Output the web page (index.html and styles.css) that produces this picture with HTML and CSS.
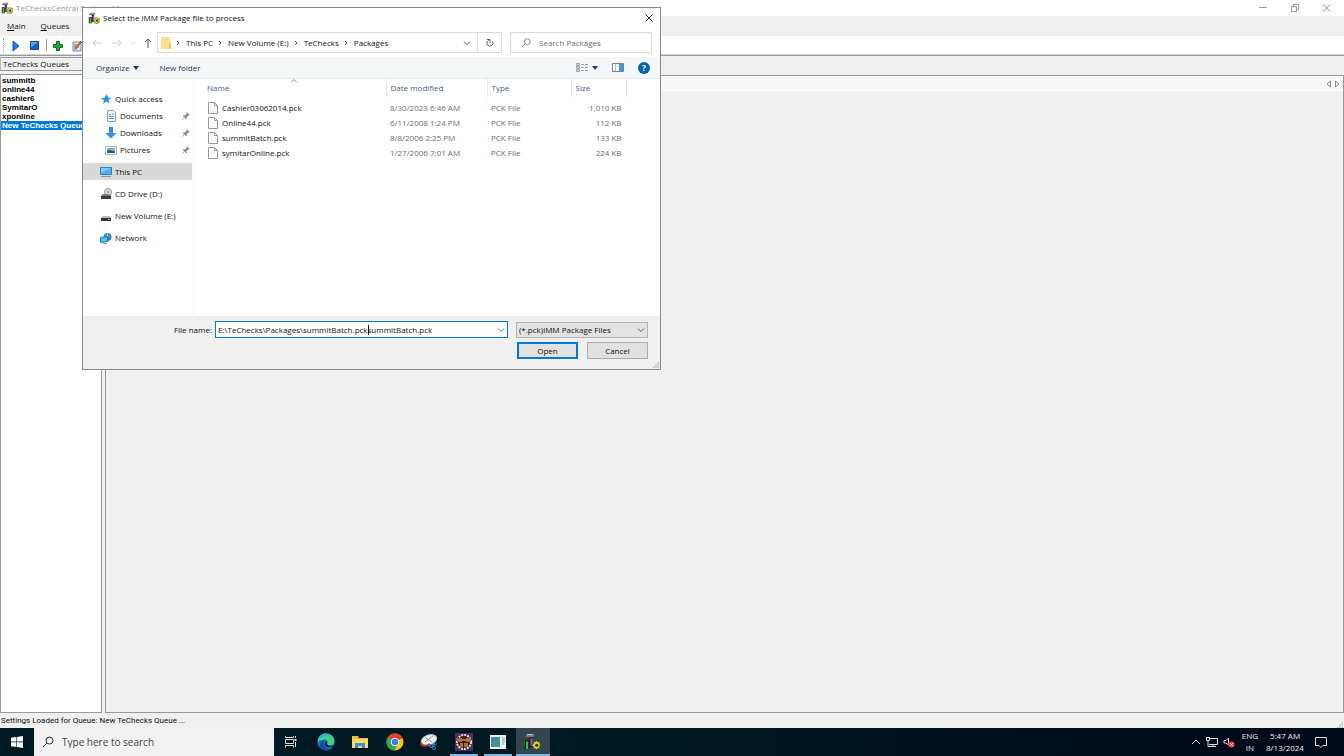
FILE: index.html
```html
<!DOCTYPE html>
<html lang="en">
<head>
    <meta charset="UTF-8">
    <meta name="viewport" content="width=device-width, initial-scale=1.0">
    <title>TeChecksCentral Settings Manager</title>
    <link rel="stylesheet" href="styles.css">
</head>
<body>
    <!-- shared icons -->
    <svg class="defs" width="0" height="0">
        <symbol id="app" viewBox="0 0 16 16">
            <path d="M1 4 3 1h6l1 2-2 1z" fill="#777"/>
            <path d="M3 1h5v1H3z" fill="#ccc"/>
            <path d="M1 7h4v8H1z" fill="#111"/>
            <path d="M2 8h2v7H2z" fill="#19d84b"/>
            <path d="M5 4h3v9H5z" fill="#111"/>
            <path d="M6 5h2v7H6z" fill="#c63bd0"/>
            <path d="m9 7 1.500 1.500L12 7l1 1.500L15 8v2.500l1 1-1.500 1 .5 2-2 0-1 1.500-1.500-1.500-2 .5.500-2L7 11.500 9 10z" fill="#d8d827" stroke="#333" stroke-width=".6"/>
            <circle cx="12" cy="11.500" r="1.500" fill="#333"/>
        </symbol>
        <symbol id="file" viewBox="0 0 10 12">
            <path d="M.5.5h6l3 3v8h-9z" fill="#fafafa" stroke="#999"/>
            <path d="M6.500.5v3h3" fill="none" stroke="#999"/>
        </symbol>
        <symbol id="pin" viewBox="0 0 10 10">
            <path d="m6 0 4 4-1 .5-1-.2-2 2 .1 2-1 .7L1 5l.7-1 2 .1 2-2L5.500 1z" fill="#8794a0"/>
            <path d="M3 7 .5 9.500" stroke="#8794a0"/>
        </symbol>
        <symbol id="down" viewBox="0 0 8 8">
            <path d="m1 2.500 3 3 3-3" fill="none" stroke="currentColor"/>
        </symbol>
        <symbol id="right" viewBox="0 0 8 8">
            <path d="m3 2 2 2-2 2" fill="none" stroke="currentColor"/>
        </symbol>
        <symbol id="glass" viewBox="0 0 12 12">
            <circle cx="7.500" cy="4.500" r="3.500" fill="none" stroke="currentColor"/>
            <path d="M5 7 1 11" stroke="currentColor"/>
        </symbol>
        <symbol id="grip" viewBox="0 0 8 8">
            <path d="M6 0h2v2H6zM3 3h2v2H3zM6 3h2v2H6zM0 6h2v2H0zM3 6h2v2H3zM6 6h2v2H6z" fill="#bcbcbc"/>
        </symbol>
    </svg>

    <div class="desktop">
        <header class="titlebar">
            <svg class="app-icon"><use href="#app"/></svg>
            <span class="app-title">TeChecksCentral Settings Manager</span>
            <button class="win-btn" aria-label="Minimize"><svg width="8" height="8"><path d="M0 3.500h8" stroke="#999"/></svg></button>
            <button class="win-btn" aria-label="Restore"><svg width="8" height="8" fill="none" stroke="#999"><path d="M.5 2.500h5v5h-5zM2.500 2V.5h5v5H6"/></svg></button>
            <button class="win-btn" aria-label="Close"><svg width="8" height="8"><path d="m.5.5 7 7m0-7-7 7" stroke="#999"/></svg></button>
        </header>
        <nav class="menubar">
            <button><u>M</u>ain</button>
            <button><u>Q</u>ueues</button>
        </nav>
        <div class="toolbar">
            <span class="handle"></span>
            <button aria-label="Start"><svg width="8" height="12"><path d="M1 1v10l6-5z" fill="#2878e0" stroke="#1050b0"/></svg></button>
            <button aria-label="Stop"><svg width="10" height="10"><path d="M.5.5h8v8h-8z" fill="#1762c8" stroke="#0c4ba8"/><path d="M1 1h7L1 6z" fill="#5aa2ee"/></svg></button>
            <span class="divider"></span>
            <button aria-label="Add"><svg width="12" height="12"><path d="M4.500 1.500h3v3h3v3h-3v3h-3v-3h-3v-3h3z" fill="#2ea32e" stroke="#0d6f12"/></svg></button>
            <button aria-label="Edit"><svg width="10" height="12"><path d="M1 2h8v9H1z" fill="#dce6f6" stroke="#7788a0"/><path d="M2 5h5M2 7h5M2 9h3" stroke="#4d74c0"/><path d="m3.500 8.500 5-6" stroke="#c36a20" stroke-width="2"/><path d="m8 1 2 2" stroke="#333"/></svg></button>
        </div>

        <div class="work">
            <aside class="queues">
                <div class="queues-head">TeChecks Queues</div>
                <ul class="queue-list">
                    <li>summitb</li>
                    <li>online44</li>
                    <li>cashier6</li>
                    <li>SymitarO</li>
                    <li>xponline</li>
                    <li class="selected">New TeChecks Queue</li>
                </ul>
            </aside>
            <main class="settings">
                <div class="tab-strip">
                    <button aria-label="Previous tab"><svg width="5" height="8"><path d="M4.500 1v6L1 4z" fill="none" stroke="#888"/></svg></button>
                    <button aria-label="Next tab"><svg width="5" height="8"><path d="M.5 1v6L4 4z" fill="none" stroke="#888"/></svg></button>
                </div>
            </main>
        </div>
        <footer class="status">
            <span>Settings Loaded for Queue: New TeChecks Queue ...</span>
            <svg width="6" height="6"><use href="#grip"/></svg>
        </footer>

        <div class="taskbar">
            <button class="start" aria-label="Start menu"><svg width="12" height="12"><path d="M0 1.700 5.400 1v4.600H0zM6 .9 12 0v5.600H6zM0 6.300h5.400V11L0 10.300zM6 6.300h6V12l-6-.9z" fill="#fff"/></svg></button>
            <label class="task-search">
                <svg width="12" height="12"><use href="#glass"/></svg>
                <input type="text" placeholder="Type here to search" aria-label="Type here to search">
            </label>
            <div class="tasks">
                <button aria-label="Task view"><svg width="12" height="12" fill="none" stroke="#ddd"><path d="M.5 0v1.500h8V0M.5 3.500h8v4h-8zM.5 11.500v-2h8v2M10.500 0v2M10.500 6v5"/><path d="M10.500 3v2" stroke-width="2"/></svg></button>
                <button aria-label="Edge"><svg width="18" height="18" viewBox="0 0 18 18"><circle cx="9" cy="9" r="8.500" fill="#1479cf"/><path d="M1 7C2 2 6 .5 9 .5c5 0 8.500 4 8.500 7.500 0 3-2 4.500-4.500 4.500-2 0-3-1-2.500-2 1-2-.5-4-3-4-3 0-5.500 1-6.500 3z" fill="#3fd08e"/><path d="M1 7C2 2 6 .5 9 .5c2 0 4 .8 5.500 2C9 2 4 4 1 7z" fill="#29b5d6"/><path d="M7 7c-2 4 1 9 6 9-2 1.500-6 2-9-.5C1 12 3 8 7 7z" fill="#0d4fa0"/><path d="M8.500 8c1 0 2 1.500 1.500 3 1 2 4 2.500 6 1.500l1 0-2 1.500c-4 1-7-.5-7.500-2.500 0-1 .3-2.500 1-3.500z" fill="#061c26"/></svg></button>
                <button aria-label="File Explorer"><svg width="16" height="14"><path d="M0 1h6l1 2h9v10H0z" fill="#f0b93a"/><path d="M0 4h16v9H0z" fill="#ffd866"/><path d="M3 13V8h10v5h-3v-2H6v2z" fill="#368fd8"/></svg></button>
                <button aria-label="Chrome"><svg width="18" height="18" viewBox="0 0 18 18"><circle cx="9" cy="9" r="8.500" fill="#fbc116"/><path d="M9 9 1.600 4.800A8.500 8.500 0 0 1 16.400 5z" fill="#e33b2e"/><path d="M9 9 1.600 4.800A8.500 8.500 0 0 0 8.500 17.500L12 11z" fill="#2da94f"/><path d="M9 5h7.400" stroke="#e33b2e"/><circle cx="9" cy="9" r="4.200" fill="#fff"/><circle cx="9" cy="9" r="3.200" fill="#3b7de9"/></svg></button>
                <button aria-label="Snipping Tool"><svg width="18" height="18"><ellipse cx="9" cy="7" rx="8" ry="5" transform="rotate(-20 9 7)" fill="#f2f2f2" stroke="#bbb"/><path d="M1 10c1 4 6 3 9 1" fill="none" stroke="#c8352c" stroke-width="2"/><path d="m5 9 8-6M6 5l6 4" stroke="#8d9298"/><g fill="none" stroke="#2c8bd2"><circle cx="11" cy="13" r="1.500"/><circle cx="14" cy="15" r="1.500"/><path d="m12 12 5-1M14 14V9"/></g></svg></button>
                <button class="open" aria-label="Toolkit"><svg width="18" height="18"><path d="M0 0h18v18H0z" fill="#47305f"/><circle cx="9" cy="9" r="7" fill="#241d23" stroke="#e4e4e4" stroke-width="2" stroke-dasharray="2 1"/><path d="M2 5h5v4H2zM11 5h5v4h-5zM6 6h6v2H6zM5 10h3v4H5zM9 10h4v4H9z" fill="#c0692a"/></svg></button>
                <button class="open" aria-label="Viewer"><svg width="16" height="14"><path d="M0 0h16v14H0z" fill="#eef1f1"/><path d="M1 2h9v10H1z" fill="#3f9a86"/><path d="M1 2h9L1 9z" fill="#4d80b8"/><path d="M12 3h3M12 5h3M12 7h3M12 9h2" stroke="#8b9ba0"/></svg></button>
                <button class="open active" aria-label="TeChecksCentral"><svg width="17" height="17"><use href="#app"/></svg></button>
            </div>
            <div class="tray">
                <svg width="10" height="8"><path d="m1 6 4-4 4 4" fill="none" stroke="#ddd"/></svg>
                <svg width="12" height="12" fill="none" stroke="#ddd"><path d="M3 2.500h8.500v6H3M7 8.500v2M4 10.500h6M.5 1.500h3v3h-3zM2 4.500v6h2"/></svg>
                <svg width="12" height="12"><path d="M1 4.500h2L5.500 2v7L3 7H1z" fill="none" stroke="#ddd"/><circle cx="8.500" cy="8.500" r="3.200" fill="#e52d35"/><path d="m7 7 3 3m0-3-3 3" stroke="#fff"/></svg>
                <div class="lang">ENG<br>IN</div>
                <div class="clock">5:47 AM<br>8/13/2024</div>
                <svg width="12" height="12"><path d="M.5 1.500h11v8H8l-2 2-2-2H.5z" fill="none" stroke="#ddd"/></svg>
            </div>
        </div>
    </div>

    <div class="dialog" role="dialog" aria-label="Select the iMM Package file to process">
        <div class="dialog-title">
            <svg class="app-icon"><use href="#app"/></svg>
            <span>Select the iMM Package file to process</span>
            <button aria-label="Close dialog"><svg width="8" height="8"><path d="m.5.5 7 7m0-7-7 7" stroke="#222"/></svg></button>
        </div>

        <div class="address-row">
            <div class="history">
                <button aria-label="Back"><svg width="10" height="8" fill="none" stroke="#ccc"><path d="M10 4H1m3-3L1 4l3 3"/></svg></button>
                <button aria-label="Forward"><svg width="10" height="8" fill="none" stroke="#ccc"><path d="M0 4h9M6 1l3 3-3 3"/></svg></button>
                <button class="recent" aria-label="Recent"><svg width="6" height="6"><use href="#down"/></svg></button>
                <button aria-label="Up"><svg width="8" height="10" fill="none" stroke="#555"><path d="M4 10V1M1 4l3-3 3 3"/></svg></button>
            </div>
            <div class="address">
                <svg width="10" height="12"><path d="M0 0h8v2h1v10H0z" fill="#ffe08a"/><path d="M8 6h2v6H8z" fill="#f2c04e"/></svg>
                <svg class="sep"><use href="#right"/></svg>
                <a href="#">This PC</a>
                <svg class="sep"><use href="#right"/></svg>
                <a href="#">New Volume (E:)</a>
                <svg class="sep"><use href="#right"/></svg>
                <a href="#">TeChecks</a>
                <svg class="sep"><use href="#right"/></svg>
                <a href="#">Packages</a>
                <button class="drop" aria-label="Previous locations"><svg width="8" height="8"><use href="#down"/></svg></button>
                <button class="refresh" aria-label="Refresh"><svg width="8" height="9" fill="none" stroke="#555"><path d="M2.500 2.500a3 3 0 1 0 4 1M1 1.500h3v3"/></svg></button>
            </div>
            <label class="search">
                <svg width="10" height="10"><use href="#glass"/></svg>
                <input type="text" placeholder="Search Packages" aria-label="Search Packages">
            </label>
        </div>

        <div class="commands">
            <button>Organize <svg width="6" height="4"><path d="M0 0h6L3 4z" fill="#1e395b"/></svg></button>
            <button>New folder</button>
            <div class="views">
                <button aria-label="Change view"><svg width="12" height="10"><path d="M.5.5h3v2h-3zM.5 3.500h3v2h-3zM.5 6.500h3v2h-3z" fill="#e8d5d5" stroke="#9aa4b0"/><path d="M5 1.500h3M9 1.500h3M5 4.500h3M9 4.500h3M5 7.500h3M9 7.500h3" stroke="#9aa0a8"/></svg><svg width="6" height="4"><path d="M0 0h6L3 4z" fill="#1e395b"/></svg></button>
                <button aria-label="Preview pane"><svg width="12" height="9"><path d="M.5.5h11v8H.5z" fill="#fff" stroke="#78828c"/><path d="M7 1h4v7H7z" fill="#3d9be9"/><path d="M3.500 1v7" stroke="#b5bcc4"/></svg></button>
                <button class="help" aria-label="Help">?</button>
            </div>
        </div>

        <div class="browser">
            <ul class="places">
                <li><svg viewBox="0 0 12 12"><path d="m7 1 1 3.500 3.500.2-3 2.300 1 3.500-3.200-2L3 11l1-3.700L.7 5l3.800-.3z" fill="#2d93e0"/></svg>Quick access</li>
                <li class="sub"><svg viewBox="0 0 12 12"><path d="M2.500.5h6l2 2v9h-8z" fill="#eef4f8" stroke="#8fa0ae"/><path d="M4 4.500h2M4 6.500h5M4 8.500h5M7 4h2" stroke="#4b9bd2"/></svg>Documents<svg class="pin"><use href="#pin"/></svg></li>
                <li class="sub"><svg viewBox="0 0 12 12"><path d="M4 0h4v6h3.500L6 11.500.5 6H4z" fill="#3490e0"/></svg>Downloads<svg class="pin"><use href="#pin"/></svg></li>
                <li class="sub"><svg viewBox="0 0 12 12"><path d="M.5 2.500h11v8H.5z" fill="#fff" stroke="#a9b2b9"/><path d="M2 4h8v5H2z" fill="#6fb4e4"/><path d="M2 6.500 5 6l5 1.500V9H2z" fill="#31566a"/></svg>Pictures<svg class="pin"><use href="#pin"/></svg></li>
                <li class="group current"><svg viewBox="0 0 12 12"><path d="M.5 1.500h11v7H.5z" fill="#45b2f2" stroke="#2e7fb9"/><path d="M1 2h10L1 7z" fill="#7bcdfa"/><path d="M1 10.500h10" stroke="#8797a3"/></svg>This PC</li>
                <li class="group"><svg viewBox="0 0 12 12"><circle cx="8" cy="4" r="3.500" fill="#ddd" stroke="#999"/><circle cx="8" cy="4" r="1" fill="#888"/><path d="M1 8 3 6h6l2 2v3H1z" fill="#777"/><path d="M1 8h10v3H1z" fill="#3c3c3c"/></svg>CD Drive (D:)</li>
                <li class="group"><svg viewBox="0 0 12 12"><path d="m1 8 2-2h6l2 2z" fill="#bbb"/><path d="M1 8h10v3H1z" fill="#333"/><path d="M8 9.500h2" stroke="#5ad060"/></svg>New Volume (E:)</li>
                <li class="group"><svg viewBox="0 0 12 12"><circle cx="7.500" cy="5" r="4" fill="#2f7fb4"/><path d="M5 3c2 0 3 2 5 1M7.500 1v8" fill="none" stroke="#8accea"/><path d="m.5 5.500 7-1v5l-7 1z" fill="#4fbcf2" stroke="#2878a8"/><path d="M3 11.500h4" stroke="#8797a3"/></svg>Network</li>
            </ul>
            <div class="files">
                <svg class="sort" width="6" height="4"><path d="m0 3.500 3-3 3 3" fill="none" stroke="#888"/></svg>
                <table>
                    <thead>
                        <tr><th class="name">Name</th><th class="date">Date modified</th><th class="type">Type</th><th class="size">Size</th></tr>
                    </thead>
                    <tbody>
                        <tr><td><svg><use href="#file"/></svg>Cashier03062014.pck</td><td>8/30/2023 6:46 AM</td><td>PCK File</td><td>1,010 KB</td></tr>
                        <tr><td><svg><use href="#file"/></svg>Online44.pck</td><td>6/11/2008 1:24 PM</td><td>PCK File</td><td>112 KB</td></tr>
                        <tr><td><svg><use href="#file"/></svg>summitBatch.pck</td><td>8/8/2006 2:25 PM</td><td>PCK File</td><td>133 KB</td></tr>
                        <tr><td><svg><use href="#file"/></svg>symitarOnline.pck</td><td>1/27/2006 7:01 AM</td><td>PCK File</td><td>224 KB</td></tr>
                    </tbody>
                </table>
            </div>
        </div>

        <form class="dialog-foot">
            <div class="field-row">
                <label for="filename">File name:</label>
                <div class="combo">
                    <input id="filename" type="text" value="E:\TeChecks\Packages\summitBatch.pcksummitBatch.pck">
                    <span class="caret"></span>
                    <svg width="8" height="8"><use href="#down"/></svg>
                </div>
                <div class="filter">
                    <select aria-label="File type">
                        <option>(*.pck)iMM Package Files</option>
                    </select>
                    <svg width="8" height="8"><use href="#down"/></svg>
                </div>
            </div>
            <div class="button-row">
                <button type="button" class="default">Open</button>
                <button type="button">Cancel</button>
            </div>
            <svg class="resize" width="6" height="6"><use href="#grip"/></svg>
        </form>
    </div>
</body>
</html>
```
FILE: styles.css
```css
* {
    box-sizing: border-box;
}

body {
    margin: 0;
    font-family: "Open Sans", "Noto Sans", sans-serif;
    font-size: 8px;
    line-height: 12px;
    color: #111;
    overflow: hidden;
}

button,
input,
select {
    font: inherit;
    color: inherit;
    background: none;
    border: none;
    padding: 0;
    margin: 0;
    border-radius: 0;
}

button {
    display: flex;
    align-items: center;
    justify-content: center;
}

input {
    outline: none;
    min-width: 0;
    width: 100%;
}

svg {
    flex: none;
    display: block;
}

ul {
    list-style: none;
    margin: 0;
    padding: 0;
}

a {
    color: inherit;
    text-decoration: none;
}

.defs {
    position: absolute;
}

.desktop {
    display: flex;
    flex-direction: column;
    height: 100vh;
    background: #f0f0f0;
}

/* main window */
.titlebar {
    display: flex;
    align-items: center;
    height: 16px;
    background: #fff;
    color: #999;
}

.app-icon {
    width: 12px;
    height: 12px;
}

.titlebar .app-icon {
    margin: 0 3px 0 1px;
}

.app-title {
    flex: 1;
}

.win-btn {
    width: 32px;
    height: 14px;
}

.titlebar .win-btn:last-child {
    margin-right: 1px;
}

.menubar {
    display: flex;
    align-items: center;
    gap: 15px;
    height: 20px;
    padding-left: 7px;
}

.toolbar {
    display: flex;
    align-items: center;
    height: 19px;
    padding-left: 3px;
    background: #fff;
    border-bottom: 1px solid #d5d5d5;
}

.toolbar button {
    width: 19px;
    padding-top: 1px;
}

.handle {
    height: 14px;
    border-left: 1px dotted #aaa;
    margin-right: 2px;
}

.divider {
    height: 12px;
    border-left: 1px solid #999;
    margin: 0 1px 0 2px;
}

.work {
    flex: 1;
    display: flex;
    gap: 3px;
    min-height: 0;
    border-top: 1px solid #999;
}

.queues {
    display: flex;
    flex-direction: column;
    width: 102px;
    gap: 3px;
    padding-top: 1px;
}

.queues-head {
    height: 14px;
    padding-left: 2px;
    border: 1px solid #999;
    border-left-color: #bbb;
}

.queue-list {
    flex: 1;
    padding-top: 1px;
    background: #fff;
    border: 1px solid #999;
    font: bold 8px/9px "Liberation Sans", sans-serif;
    color: #000;
}

.queue-list li {
    padding-left: 1px;
    white-space: nowrap;
    overflow: hidden;
}

.queue-list .selected {
    background: #0078d7;
    color: #fff;
}

.settings {
    flex: 1;
    margin-top: 19px;
    border: 1px solid #999;
}

.tab-strip {
    display: flex;
    justify-content: flex-end;
    gap: 4px;
    height: 15px;
    padding: 2px 3px 0 0;
    background: #f7f7f7;
    border-bottom: 1px solid #fff;
}

.status {
    display: flex;
    justify-content: space-between;
    align-items: center;
    height: 15px;
    padding: 0 1px;
    font-family: Roboto, sans-serif;
}

.status svg {
    align-self: flex-end;
}

/* taskbar */
.taskbar {
    display: flex;
    height: 28px;
    background: linear-gradient(to right, #001a22, #001822 50%, #000b1a 90%);
    color: #eee;
}

.start {
    width: 34px;
}

.task-search {
    display: flex;
    align-items: center;
    gap: 8px;
    width: 240px;
    padding-left: 8px;
    background: #f2f2f2;
    color: #333;
    font-size: 10px;
}

.task-search input::placeholder {
    color: #444;
}

.tasks {
    display: flex;
    width: 276px;
}

.tasks button {
    flex: 1;
}

.tasks .open {
    background: linear-gradient(#76b9ed, #76b9ed) bottom / 28px 2px no-repeat;
}

.tasks .active {
    background: #34464d;
    border-bottom: 2px solid #76b9ed;
}

.tray {
    display: flex;
    align-items: center;
    gap: 5px;
    margin-left: auto;
    padding-right: 17px;
    text-align: center;
}

.lang {
    width: 22px;
    margin-left: -1px;
}

.clock {
    width: 38px;
    margin-right: 6px;
}

/* open file dialog */
.dialog {
    position: absolute;
    left: 82px;
    top: 7px;
    width: 579px;
    background: #fff;
    border: 1px solid #888;
}

.dialog-title {
    display: flex;
    align-items: center;
    gap: 3px;
    height: 20px;
    padding-left: 5px;
}

.dialog-title button {
    width: 22px;
    height: 20px;
    margin-left: auto;
}

.address-row {
    display: flex;
    align-items: center;
    gap: 8px;
    height: 29px;
    padding: 0 8px;
}

.history {
    display: flex;
    align-items: center;
    gap: 10px;
    width: 66px;
    padding-left: 1px;
    margin-right: -8px;
}

.recent {
    color: #ccc;
    margin: 0 -2px;
}

.address {
    flex: 1;
    display: flex;
    align-items: center;
    height: 21px;
    padding-left: 3px;
    border: 1px solid #d9d9d9;
}

.sep {
    width: 8px;
    height: 8px;
    margin: 0 4px 0 3px;
    color: #555;
}

.drop {
    width: 20px;
    height: 19px;
    margin-left: auto;
    color: #555;
}

.refresh {
    width: 24px;
    height: 19px;
    border-left: 1px solid #d9d9d9;
}

.search {
    display: flex;
    align-items: center;
    gap: 8px;
    width: 142px;
    height: 21px;
    padding-left: 10px;
    border: 1px solid #d9d9d9;
    color: #777;
}

.search input::placeholder {
    color: #6d6d6d;
}

.commands {
    display: flex;
    align-items: center;
    gap: 20px;
    height: 22px;
    padding: 0 10px 0 13px;
    background: #f5f6f7;
    border-bottom: 1px solid #e8e9ea;
    color: #1e395b;
}

.commands button {
    gap: 4px;
}

.views {
    display: flex;
    align-items: center;
    gap: 14px;
    margin-left: auto;
}

.help {
    width: 12px;
    height: 12px;
    border-radius: 50%;
    background: #0063b1;
    color: #fff;
    font-weight: bold;
}

.browser {
    display: flex;
    height: 237px;
}

.places {
    width: 111px;
    padding: 11px 1px 0 0;
    border-right: 1px solid #f3f3f3;
}

.places li {
    display: flex;
    align-items: center;
    gap: 3px;
    height: 17px;
    padding-left: 17px;
}

.places svg {
    width: 12px;
    height: 12px;
}

.places .sub {
    padding-left: 22px;
}

.places .group {
    margin-top: 5px;
}

.places .current {
    background: #d9d9d9;
}

.places .pin {
    width: 8px;
    height: 8px;
    margin: 0 2px 0 auto;
}

.files {
    position: relative;
    flex: 1;
}

.sort {
    position: absolute;
    left: 97px;
    top: 0;
}

table {
    table-layout: fixed;
    border-collapse: collapse;
    width: 433px;
    color: #6d6d6d;
}

th {
    height: 18px;
    padding: 0 4px;
    font-weight: normal;
    text-align: left;
    color: #4c607a;
    border-right: 1px solid #e5e5e5;
}

.name {
    width: 192px;
    padding-left: 13px;
}

.date {
    width: 101px;
}

.type {
    width: 84px;
}

td {
    height: 15px;
    padding: 0 4px;
}

td:first-child {
    display: flex;
    align-items: center;
    gap: 4px;
    padding-left: 14px;
    color: #111;
}

td:last-child {
    text-align: right;
    padding-right: 5px;
}

td svg {
    width: 10px;
    height: 12px;
}

tbody::before {
    content: "";
    display: table-row;
    height: 3px;
}

.dialog-foot {
    position: relative;
    height: 53px;
    padding: 5px 12px 0;
    background: #f0f0f0;
}

.field-row {
    display: flex;
    align-items: center;
    gap: 8px;
}

.field-row label {
    width: 117px;
    margin-right: -5px;
    text-align: right;
}

.combo {
    position: relative;
    flex: 1;
    display: flex;
    align-items: center;
    height: 17px;
    padding: 0 2px;
    background: #fff;
    border: 1px solid #0078d7;
    color: #111;
}

.combo svg,
.filter svg {
    color: #666;
}

.caret {
    position: absolute;
    left: 152px;
    top: 3px;
    height: 10px;
    border-left: 1px solid #000;
}

.filter {
    position: relative;
    width: 132px;
}

.filter select {
    appearance: none;
    display: block;
    width: 100%;
    height: 16px;
    padding-left: 2px;
    background: #e3e3e3;
    border: 1px solid #b4b4b4;
}

.filter svg {
    position: absolute;
    right: 3px;
    top: 4px;
    pointer-events: none;
}

.button-row {
    display: flex;
    justify-content: flex-end;
    gap: 9px;
    margin-top: 4px;
}

.button-row button {
    width: 61px;
    height: 17px;
    background: #e1e1e1;
    border: 1px solid #adadad;
}

.button-row .default {
    border: 2px solid #0078d7;
}

.resize {
    position: absolute;
    right: 1px;
    bottom: 1px;
}
```
